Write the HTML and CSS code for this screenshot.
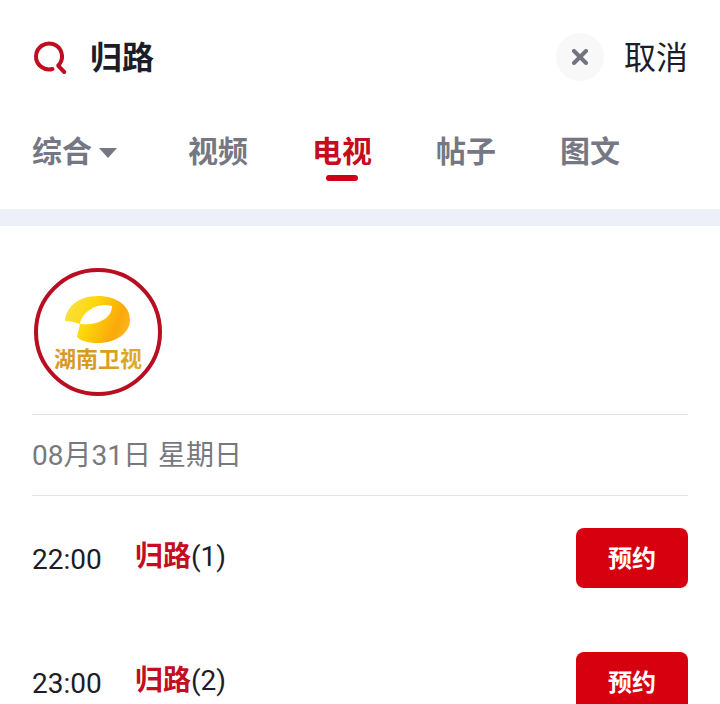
FILE: index.html
```html
<!DOCTYPE html>
<html lang="zh-CN">
<head>
    <meta charset="UTF-8">
    <meta name="viewport" content="width=device-width, initial-scale=1.0">
    <title>归路 - 搜索</title>
    <link rel="stylesheet" href="styles.css">
</head>
<body>
    <header>
        <form class="search-bar">
            <svg class="search-icon" viewBox="0 0 36 36" aria-hidden="true">
                <path d="M20.5 30A13 13 0 1 1 27.4 25.3Q25.4 26 26.8 27.4L32.2 33" />
            </svg>
            <input type="text" class="search-input" aria-label="搜索" value="归路">
            <button type="reset" class="clear-btn" aria-label="清除">
                <svg viewBox="0 0 16 16"><path d="M2 2L14 14M14 2L2 14" /></svg>
            </button>
            <button type="button" class="cancel-btn">取消</button>
        </form>
        <nav class="tabs">
            <a href="#all" class="tab tab-all">综合
                <svg class="caret" viewBox="0 0 18 10"><path d="M0 0H18L9 10Z" /></svg>
            </a>
            <a href="#video" class="tab">视频</a>
            <a href="#tv" class="tab active" aria-current="page">电视</a>
            <a href="#posts" class="tab">帖子</a>
            <a href="#articles" class="tab">图文</a>
        </nav>
    </header>

    <main>
        <div class="channel">
            <svg class="channel-logo" viewBox="0 0 132 132" role="img" aria-label="湖南卫视">
                <defs>
                    <linearGradient id="lobe" x1="0" y1="0.2" x2="1" y2="0.5">
                        <stop offset="0" stop-color="#f9e04a" />
                        <stop offset="0.4" stop-color="#fdd80c" />
                        <stop offset="0.85" stop-color="#fba80a" />
                        <stop offset="1" stop-color="#fbb41a" />
                    </linearGradient>
                    <linearGradient id="name" x1="0" y1="0" x2="1" y2="0">
                        <stop offset="0" stop-color="#dc982c" />
                        <stop offset="0.5" stop-color="#d79a1c" />
                        <stop offset="1" stop-color="#dfae24" />
                    </linearGradient>
                </defs>
                <circle cx="66" cy="66" r="62" fill="#fff" stroke="#b90d22" stroke-width="4" />
                <path fill="url(#lobe)" d="M33 55C34 41 46 30 66 30C85 30 98 40 98 54C98 67 84 77 66 77C57 77 49 75 45 71L48 58C66 60 80 52 80 40C65 36 50 46 48 58Q40 55 33 55Z" />
                <text class="logo-name" x="66" y="101" text-anchor="middle" fill="url(#name)">湖南卫视</text>
            </svg>
        </div>

        <h2 class="date">08月31日 星期日</h2>

        <ul class="programs">
            <li class="program">
                <time class="time">22:00</time>
                <span class="title"><em>归路</em>(1)</span>
                <button type="button" class="book-btn">预约</button>
            </li>
            <li class="program">
                <time class="time">23:00</time>
                <span class="title"><em>归路</em>(2)</span>
                <button type="button" class="book-btn">预约</button>
            </li>
        </ul>
    </main>
</body>
</html>
```
FILE: styles.css
```css
/* General Styling */
* {
    box-sizing: border-box;
}

body {
    margin: 0;
    font-family: Roboto, "Noto Sans CJK SC", sans-serif;
    font-size: 28px;
    background-color: #fff;
    color: #1b1d28;
}

button {
    padding: 0;
    border: none;
    font-family: inherit;
    color: inherit;
    cursor: pointer;
}

/* Search Bar */
header {
    border-bottom: 17px solid #edf0f6;
}

.search-bar {
    display: flex;
    align-items: center;
    height: 114px;
    padding: 0 32px;
}

.search-icon {
    width: 36px;
    height: 36px;
    fill: none;
    stroke: #c00d20;
    stroke-width: 4;
    stroke-linecap: round;
    stroke-linejoin: round;
}

.search-input {
    flex: 1;
    min-width: 0;
    margin-left: 22px;
    padding: 0 0 4px;
    border: none;
    outline: none;
    font-family: inherit;
    font-size: 32px;
    font-weight: bold;
    color: inherit;
}

.clear-btn {
    display: flex;
    align-items: center;
    justify-content: center;
    width: 48px;
    height: 48px;
    border-radius: 50%;
    background-color: #f8f8f9;
}

.clear-btn svg {
    width: 16px;
    height: 16px;
    fill: none;
    stroke: #72747f;
    stroke-width: 4;
    stroke-linecap: round;
}

.cancel-btn {
    margin-left: 20px;
    padding-bottom: 4px;
    background: none;
    font-size: 32px;
}

/* Tabs */
.tabs {
    display: flex;
    gap: 64px;
    padding: 16px 32px 27px;
}

.tab {
    display: flex;
    flex-direction: column;
    align-items: center;
    height: 52px;
    font-size: 30px;
    font-weight: bold;
    line-height: 44px;
    color: #757884;
    text-decoration: none;
}

.tab-all {
    flex-direction: row;
    align-items: flex-start;
    width: 92px;
}

.caret {
    flex: none;
    width: 18px;
    height: 10px;
    margin: 18px 0 0 7px;
    fill: #757884;
}

.tab.active {
    color: #c50d20;
}

.tab.active::after {
    content: "";
    width: 32px;
    height: 6px;
    margin-top: 1px;
    border-radius: 3px;
    background-color: #cc0418;
}

/* Channel */
main {
    padding: 0 32px;
}

.channel {
    padding: 40px 0 16px;
    border-bottom: 1px solid #e4e4e6;
}

.channel-logo {
    display: block;
    width: 132px;
    height: 132px;
}

.logo-name {
    font-family: "Noto Sans CJK SC", sans-serif;
    font-size: 22px;
    font-weight: bold;
}

.date {
    margin: 0;
    padding-top: 2px;
    border-bottom: 1px solid #e4e4e6;
    font-size: 28px;
    font-weight: normal;
    line-height: 78px;
    color: #77797f;
}

/* Program List */
.programs {
    margin: 0;
    padding: 0;
    list-style: none;
}

.program {
    display: flex;
    align-items: center;
    height: 124px;
}

.time {
    width: 103px;
    padding-top: 2px;
}

.title {
    flex: 1;
    padding-bottom: 8px;
}

.title em {
    font-style: normal;
    font-weight: bold;
    color: #c50d20;
}

.book-btn {
    width: 112px;
    height: 60px;
    padding-bottom: 4px;
    border-radius: 8px;
    background-color: #d7000f;
    font-size: 24px;
    font-weight: bold;
    color: #fff;
}
```
